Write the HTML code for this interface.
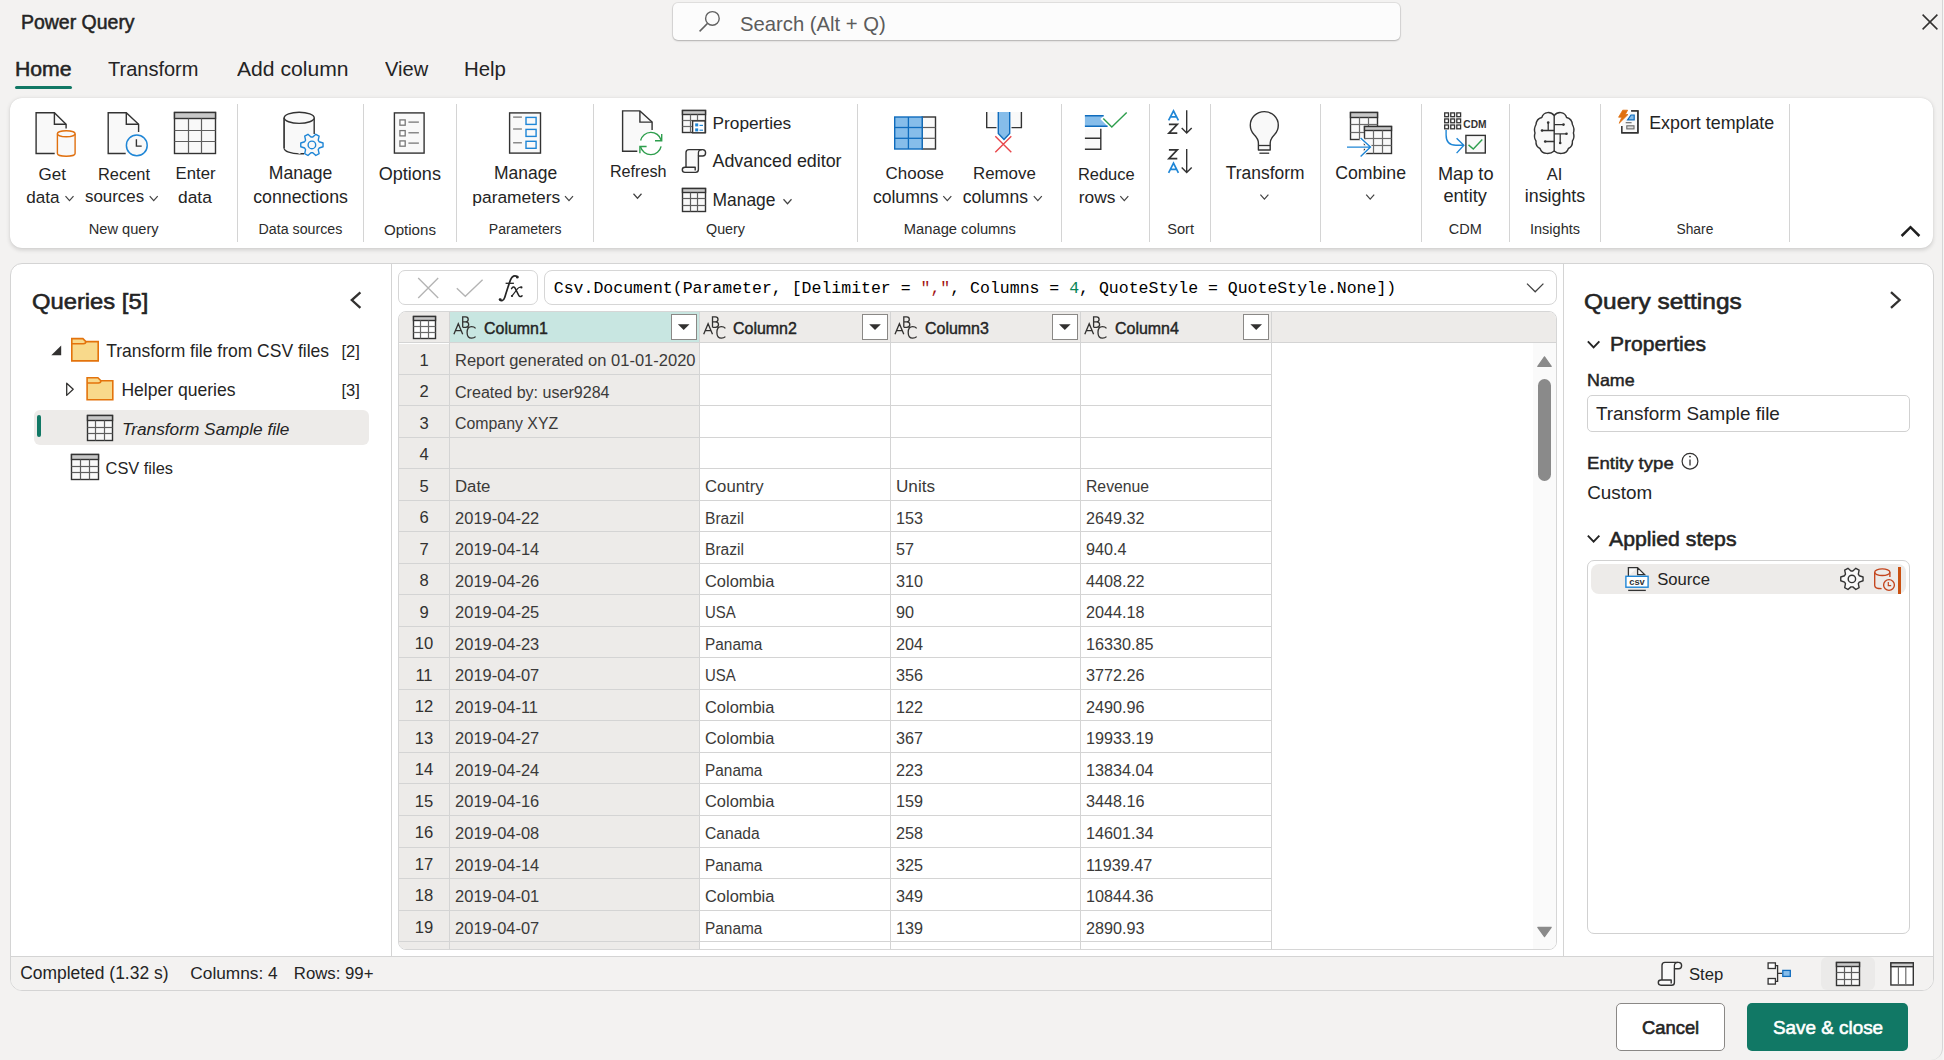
<!DOCTYPE html><html><head><meta charset="utf-8"><style>
html,body{margin:0;padding:0}
body{width:1944px;height:1060px;overflow:hidden;background:#f3f2f1;position:relative;font-family:"Liberation Sans",sans-serif;color:#242424}
.t{position:absolute;line-height:1;white-space:pre}
.b{position:absolute;box-sizing:border-box}
svg{position:absolute;left:0;top:0}
</style></head><body>
<div class="t" style="top:12.59px;font-size:19.86px;-webkit-text-stroke:0.52px #242424;left:21.20px;transform:scaleX(0.9803);transform-origin:0 0;">Power Query</div>
<div class="b" style="left:673px;top:3px;width:727px;height:37px;background:#fcfcfc;border-radius:5px;box-shadow:0 0 0 1px rgba(0,0,0,0.07),0 1px 2px rgba(0,0,0,0.22);"></div>
<div class="t" style="top:14.45px;font-size:20.14px;color:#5c5c5c;left:740.20px;transform:scaleX(1.0058);transform-origin:0 0;">Search (Alt + Q)</div>
<div class="b" style="left:-20px;top:-20px;width:1963px;height:1080px;border-right:1px solid #d6d6d6;border-bottom-right-radius:12px;"></div>
<div class="b" style="left:1943px;top:0px;width:1px;height:1060px;background:#f7f7f7;"></div>
<div class="t" style="top:58.70px;font-size:20.55px;-webkit-text-stroke:0.53px #242424;left:15.40px;transform:scaleX(1.0325);transform-origin:0 0;">Home</div>
<div class="t" style="top:59.04px;font-size:20.27px;left:108.00px;transform:scaleX(0.9878);transform-origin:0 0;">Transform</div>
<div class="t" style="top:59.04px;font-size:20.27px;left:236.50px;transform:scaleX(1.0418);transform-origin:0 0;">Add column</div>
<div class="t" style="top:59.04px;font-size:20.27px;left:384.80px;transform:scaleX(0.9901);transform-origin:0 0;">View</div>
<div class="t" style="top:59.04px;font-size:20.27px;left:464.30px;transform:scaleX(1.0047);transform-origin:0 0;">Help</div>
<div class="b" style="left:15px;top:86px;width:57px;height:3px;background:#117865;border-radius:1.5px;"></div>
<div class="b" style="left:10px;top:98px;width:1923px;height:150px;background:#ffffff;border-radius:12px;box-shadow:0 1.5px 4px rgba(0,0,0,0.15),0 0 1px rgba(0,0,0,0.1);"></div>
<div class="b" style="left:237px;top:104px;width:1px;height:138px;background:#d4d4d4;"></div>
<div class="b" style="left:363px;top:104px;width:1px;height:138px;background:#d4d4d4;"></div>
<div class="b" style="left:456px;top:104px;width:1px;height:138px;background:#d4d4d4;"></div>
<div class="b" style="left:593px;top:104px;width:1px;height:138px;background:#d4d4d4;"></div>
<div class="b" style="left:857px;top:104px;width:1px;height:138px;background:#d4d4d4;"></div>
<div class="b" style="left:1061px;top:104px;width:1px;height:138px;background:#d4d4d4;"></div>
<div class="b" style="left:1149px;top:104px;width:1px;height:138px;background:#d4d4d4;"></div>
<div class="b" style="left:1210px;top:104px;width:1px;height:138px;background:#d4d4d4;"></div>
<div class="b" style="left:1320px;top:104px;width:1px;height:138px;background:#d4d4d4;"></div>
<div class="b" style="left:1421px;top:104px;width:1px;height:138px;background:#d4d4d4;"></div>
<div class="b" style="left:1509px;top:104px;width:1px;height:138px;background:#d4d4d4;"></div>
<div class="b" style="left:1600px;top:104px;width:1px;height:138px;background:#d4d4d4;"></div>
<div class="b" style="left:1789px;top:104px;width:1px;height:138px;background:#d4d4d4;"></div>
<div class="t" style="top:165.67px;font-size:17.05px;left:38.50px;">Get</div>
<div class="t" style="top:189.12px;font-size:17.1px;left:26.30px;">data</div>
<div class="t" style="top:166.20px;font-size:16.42px;left:97.99px;">Recent</div>
<div class="t" style="top:189.29px;font-size:16.9px;left:85.00px;">sources</div>
<div class="t" style="top:165.97px;font-size:16.69px;left:175.61px;">Enter</div>
<div class="t" style="top:188.90px;font-size:17.36px;left:178.00px;">data</div>
<div class="t" style="top:165.21px;font-size:17.59px;left:268.81px;">Manage</div>
<div class="t" style="top:188.57px;font-size:17.76px;left:253.20px;">connections</div>
<div class="t" style="top:164.80px;font-size:18.07px;left:378.70px;">Options</div>
<div class="t" style="top:165.40px;font-size:17.48px;left:494.00px;">Manage</div>
<div class="t" style="top:188.87px;font-size:17.4px;left:472.30px;">parameters</div>
<div class="t" style="top:163.19px;font-size:16.2px;left:609.93px;">Refresh</div>
<div class="t" style="top:114.56px;font-size:17.29px;left:712.50px;">Properties</div>
<div class="t" style="top:152.96px;font-size:17.88px;left:712.49px;">Advanced editor</div>
<div class="t" style="top:192.12px;font-size:17.46px;left:712.49px;">Manage</div>
<div class="t" style="top:165.76px;font-size:16.94px;left:885.60px;">Choose</div>
<div class="t" style="top:188.70px;font-size:17.6px;left:872.89px;">columns</div>
<div class="t" style="top:165.82px;font-size:16.87px;left:973.00px;">Remove</div>
<div class="t" style="top:188.77px;font-size:17.52px;left:962.69px;">columns</div>
<div class="t" style="top:166.15px;font-size:16.48px;left:1077.89px;">Reduce</div>
<div class="t" style="top:188.93px;font-size:17.33px;left:1078.80px;">rows</div>
<div class="t" style="top:165.05px;font-size:17.43px;left:1225.81px;">Transform</div>
<div class="t" style="top:164.83px;font-size:17.69px;left:1335.20px;">Combine</div>
<div class="t" style="top:164.69px;font-size:18.2px;left:1437.93px;">Map to</div>
<div class="t" style="top:187.19px;font-size:18.2px;left:1443.40px;">entity</div>
<div class="t" style="top:166.12px;font-size:16.51px;left:1546.70px;">AI</div>
<div class="t" style="top:187.52px;font-size:17.82px;left:1524.80px;">insights</div>
<div class="t" style="top:114.67px;font-size:17.87px;left:1649.18px;">Export template</div>
<div class="t" style="top:221.91px;font-size:14.64px;color:#2b2b2b;left:88.71px;">New query</div>
<div class="t" style="top:222.25px;font-size:14.24px;color:#2b2b2b;left:258.50px;">Data sources</div>
<div class="t" style="top:221.51px;font-size:15.11px;color:#2b2b2b;left:383.90px;">Options</div>
<div class="t" style="top:222.39px;font-size:14.07px;color:#2b2b2b;left:488.80px;">Parameters</div>
<div class="t" style="top:222.17px;font-size:14.33px;color:#2b2b2b;left:705.99px;">Query</div>
<div class="t" style="top:221.83px;font-size:14.73px;color:#2b2b2b;left:903.82px;">Manage columns</div>
<div class="t" style="top:221.94px;font-size:14.6px;color:#2b2b2b;left:1167.20px;">Sort</div>
<div class="t" style="top:222.05px;font-size:14.47px;color:#2b2b2b;left:1448.75px;">CDM</div>
<div class="t" style="top:222.03px;font-size:14.5px;color:#2b2b2b;left:1530.01px;">Insights</div>
<div class="t" style="top:222.62px;font-size:13.8px;color:#2b2b2b;left:1676.49px;">Share</div>
<div class="b" style="left:10px;top:263px;width:1924px;height:728px;background:#ffffff;border:1px solid #d4d4d4;border-radius:12px;overflow:hidden;"></div>
<div class="b" style="left:11px;top:956px;width:1922px;height:34px;background:#f3f2f1;border-top:1px solid #d4d4d4;border-radius:0 0 11px 11px;"></div>
<div class="b" style="left:391px;top:264px;width:1px;height:692px;background:#d4d4d4;"></div>
<div class="b" style="left:1563px;top:264px;width:1px;height:692px;background:#d4d4d4;"></div>
<div class="t" style="top:289.93px;font-size:22.88px;-webkit-text-stroke:0.59px #242424;left:31.50px;transform:scaleX(1.0389);transform-origin:0 0;">Queries [5]</div>
<div class="t" style="top:342.69px;font-size:17.49px;left:106.22px;">Transform file from CSV files</div>
<div class="t" style="top:343.50px;font-size:16.54px;left:341.40px;">[2]</div>
<div class="t" style="top:381.64px;font-size:17.56px;left:121.41px;">Helper queries</div>
<div class="t" style="top:382.50px;font-size:16.54px;left:341.40px;">[3]</div>
<div class="b" style="left:34px;top:410px;width:335px;height:35px;background:#edebe9;border-radius:6px;"></div>
<div class="b" style="left:37px;top:415px;width:4px;height:22px;background:#117865;border-radius:2px;"></div>
<div class="t" style="top:420.50px;font-size:17.25px;font-style:italic;left:122.02px;">Transform Sample file</div>
<div class="t" style="top:459.93px;font-size:16.39px;left:105.60px;">CSV files</div>
<div class="b" style="left:398px;top:270px;width:140px;height:35px;background:#fff;border:1px solid #d6d6d6;border-radius:7px;"></div>
<div class="b" style="left:544px;top:270px;width:1013px;height:35px;background:#fff;border:1px solid #d6d6d6;border-radius:8px;"></div>
<div class="t" style="top:281.14px;font-size:16.52px;color:#000000;font-family:'Liberation Mono';left:553.80px;">Csv.Document(Parameter, [Delimiter = <span style="color:#a31515">","</span>, Columns = <span style="color:#098658">4</span>, QuoteStyle = QuoteStyle.None])</div>
<div class="b" style="left:398px;top:311px;width:1159px;height:639px;background:#ffffff;border:1px solid #d6d6d6;border-radius:8px;overflow:hidden;"></div>
<div class="b" style="left:399px;top:312px;width:1157px;height:31px;background:#edebe9;border-radius:7px 7px 0 0;"></div>
<div class="b" style="left:450px;top:312px;width:249px;height:31px;background:#c8e6e1;"></div>
<div class="b" style="left:399px;top:343px;width:300px;height:606px;background:#edebe9;border-radius:0 0 0 7px;"></div>
<div class="b" style="left:399px;top:342px;width:1157px;height:1px;background:#d4d4d4;"></div>
<div class="b" style="left:399px;top:343px;width:50px;height:1px;background:#ffffff;"></div>
<div class="b" style="left:1533px;top:343px;width:23px;height:606px;background:#fafafa;border-radius:0 0 7px 0;"></div>
<div class="b" style="left:399px;top:374px;width:873px;height:1px;background:#d4d4d4;"></div>
<div class="b" style="left:399px;top:405px;width:873px;height:1px;background:#d4d4d4;"></div>
<div class="b" style="left:399px;top:437px;width:873px;height:1px;background:#d4d4d4;"></div>
<div class="b" style="left:399px;top:468px;width:873px;height:1px;background:#d4d4d4;"></div>
<div class="b" style="left:399px;top:500px;width:873px;height:1px;background:#d4d4d4;"></div>
<div class="b" style="left:399px;top:531px;width:873px;height:1px;background:#d4d4d4;"></div>
<div class="b" style="left:399px;top:563px;width:873px;height:1px;background:#d4d4d4;"></div>
<div class="b" style="left:399px;top:594px;width:873px;height:1px;background:#d4d4d4;"></div>
<div class="b" style="left:399px;top:626px;width:873px;height:1px;background:#d4d4d4;"></div>
<div class="b" style="left:399px;top:657px;width:873px;height:1px;background:#d4d4d4;"></div>
<div class="b" style="left:399px;top:689px;width:873px;height:1px;background:#d4d4d4;"></div>
<div class="b" style="left:399px;top:720px;width:873px;height:1px;background:#d4d4d4;"></div>
<div class="b" style="left:399px;top:752px;width:873px;height:1px;background:#d4d4d4;"></div>
<div class="b" style="left:399px;top:783px;width:873px;height:1px;background:#d4d4d4;"></div>
<div class="b" style="left:399px;top:815px;width:873px;height:1px;background:#d4d4d4;"></div>
<div class="b" style="left:399px;top:847px;width:873px;height:1px;background:#d4d4d4;"></div>
<div class="b" style="left:399px;top:878px;width:873px;height:1px;background:#d4d4d4;"></div>
<div class="b" style="left:399px;top:910px;width:873px;height:1px;background:#d4d4d4;"></div>
<div class="b" style="left:399px;top:941px;width:873px;height:1px;background:#d4d4d4;"></div>
<div class="b" style="left:449px;top:312px;width:1px;height:637px;background:#d4d4d4;"></div>
<div class="b" style="left:699px;top:312px;width:1px;height:637px;background:#d4d4d4;"></div>
<div class="b" style="left:890px;top:312px;width:1px;height:637px;background:#d4d4d4;"></div>
<div class="b" style="left:1080px;top:312px;width:1px;height:637px;background:#d4d4d4;"></div>
<div class="b" style="left:1271px;top:312px;width:1px;height:637px;background:#d4d4d4;"></div>
<div class="t" style="top:352.65px;font-size:16.6px;color:#323130;left:124.00px;width:600px;text-align:center;">1</div>
<div class="t" style="top:352.18px;font-size:16.45px;color:#3b3a39;left:455.10px;transform:scaleX(1.0046);transform-origin:0 0;">Report generated on 01-01-2020</div>
<div class="t" style="top:384.17px;font-size:16.6px;color:#323130;left:124.00px;width:600px;text-align:center;">2</div>
<div class="t" style="top:383.70px;font-size:16.45px;color:#3b3a39;left:455.10px;transform:scaleX(0.9777);transform-origin:0 0;">Created by: user9284</div>
<div class="t" style="top:415.69px;font-size:16.6px;color:#323130;left:124.00px;width:600px;text-align:center;">3</div>
<div class="t" style="top:415.22px;font-size:16.45px;color:#3b3a39;left:455.10px;transform:scaleX(0.9660);transform-origin:0 0;">Company XYZ</div>
<div class="t" style="top:447.21px;font-size:16.6px;color:#323130;left:124.00px;width:600px;text-align:center;">4</div>
<div class="t" style="top:478.73px;font-size:16.6px;color:#323130;left:124.00px;width:600px;text-align:center;">5</div>
<div class="t" style="top:478.26px;font-size:16.45px;color:#3b3a39;left:455.10px;transform:scaleX(1.0212);transform-origin:0 0;">Date</div>
<div class="t" style="top:478.26px;font-size:16.45px;color:#3b3a39;left:704.90px;transform:scaleX(1.0175);transform-origin:0 0;">Country</div>
<div class="t" style="top:478.26px;font-size:16.45px;color:#3b3a39;left:896.20px;transform:scaleX(1.0417);transform-origin:0 0;">Units</div>
<div class="t" style="top:478.26px;font-size:16.45px;color:#3b3a39;left:1086.00px;transform:scaleX(0.9578);transform-origin:0 0;">Revenue</div>
<div class="t" style="top:510.25px;font-size:16.6px;color:#323130;left:124.00px;width:600px;text-align:center;">6</div>
<div class="t" style="top:509.78px;font-size:16.45px;color:#3b3a39;left:455.10px;transform:scaleX(1.0000);transform-origin:0 0;">2019-04-22</div>
<div class="t" style="top:509.78px;font-size:16.45px;color:#3b3a39;left:704.90px;transform:scaleX(0.9487);transform-origin:0 0;">Brazil</div>
<div class="t" style="top:509.78px;font-size:16.45px;color:#3b3a39;left:896.20px;transform:scaleX(0.9851);transform-origin:0 0;">153</div>
<div class="t" style="top:509.78px;font-size:16.45px;color:#3b3a39;left:1086.00px;transform:scaleX(0.9851);transform-origin:0 0;">2649.32</div>
<div class="t" style="top:541.77px;font-size:16.6px;color:#323130;left:124.00px;width:600px;text-align:center;">7</div>
<div class="t" style="top:541.30px;font-size:16.45px;color:#3b3a39;left:455.10px;transform:scaleX(1.0000);transform-origin:0 0;">2019-04-14</div>
<div class="t" style="top:541.30px;font-size:16.45px;color:#3b3a39;left:704.90px;transform:scaleX(0.9487);transform-origin:0 0;">Brazil</div>
<div class="t" style="top:541.30px;font-size:16.45px;color:#3b3a39;left:896.20px;transform:scaleX(0.9851);transform-origin:0 0;">57</div>
<div class="t" style="top:541.30px;font-size:16.45px;color:#3b3a39;left:1086.00px;transform:scaleX(0.9851);transform-origin:0 0;">940.4</div>
<div class="t" style="top:573.29px;font-size:16.6px;color:#323130;left:124.00px;width:600px;text-align:center;">8</div>
<div class="t" style="top:572.82px;font-size:16.45px;color:#3b3a39;left:455.10px;transform:scaleX(1.0000);transform-origin:0 0;">2019-04-26</div>
<div class="t" style="top:572.82px;font-size:16.45px;color:#3b3a39;left:704.90px;transform:scaleX(0.9986);transform-origin:0 0;">Colombia</div>
<div class="t" style="top:572.82px;font-size:16.45px;color:#3b3a39;left:896.20px;transform:scaleX(0.9851);transform-origin:0 0;">310</div>
<div class="t" style="top:572.82px;font-size:16.45px;color:#3b3a39;left:1086.00px;transform:scaleX(0.9851);transform-origin:0 0;">4408.22</div>
<div class="t" style="top:604.81px;font-size:16.6px;color:#323130;left:124.00px;width:600px;text-align:center;">9</div>
<div class="t" style="top:604.34px;font-size:16.45px;color:#3b3a39;left:455.10px;transform:scaleX(1.0000);transform-origin:0 0;">2019-04-25</div>
<div class="t" style="top:604.34px;font-size:16.45px;color:#3b3a39;left:704.90px;transform:scaleX(0.9091);transform-origin:0 0;">USA</div>
<div class="t" style="top:604.34px;font-size:16.45px;color:#3b3a39;left:896.20px;transform:scaleX(0.9851);transform-origin:0 0;">90</div>
<div class="t" style="top:604.34px;font-size:16.45px;color:#3b3a39;left:1086.00px;transform:scaleX(0.9851);transform-origin:0 0;">2044.18</div>
<div class="t" style="top:636.33px;font-size:16.6px;color:#323130;left:124.00px;width:600px;text-align:center;">10</div>
<div class="t" style="top:635.86px;font-size:16.45px;color:#3b3a39;left:455.10px;transform:scaleX(1.0000);transform-origin:0 0;">2019-04-23</div>
<div class="t" style="top:635.86px;font-size:16.45px;color:#3b3a39;left:704.90px;transform:scaleX(0.9367);transform-origin:0 0;">Panama</div>
<div class="t" style="top:635.86px;font-size:16.45px;color:#3b3a39;left:896.20px;transform:scaleX(0.9851);transform-origin:0 0;">204</div>
<div class="t" style="top:635.86px;font-size:16.45px;color:#3b3a39;left:1086.00px;transform:scaleX(0.9851);transform-origin:0 0;">16330.85</div>
<div class="t" style="top:667.85px;font-size:16.6px;color:#323130;left:124.00px;width:600px;text-align:center;">11</div>
<div class="t" style="top:667.38px;font-size:16.45px;color:#3b3a39;left:455.10px;transform:scaleX(1.0000);transform-origin:0 0;">2019-04-07</div>
<div class="t" style="top:667.38px;font-size:16.45px;color:#3b3a39;left:704.90px;transform:scaleX(0.9091);transform-origin:0 0;">USA</div>
<div class="t" style="top:667.38px;font-size:16.45px;color:#3b3a39;left:896.20px;transform:scaleX(0.9851);transform-origin:0 0;">356</div>
<div class="t" style="top:667.38px;font-size:16.45px;color:#3b3a39;left:1086.00px;transform:scaleX(0.9851);transform-origin:0 0;">3772.26</div>
<div class="t" style="top:699.37px;font-size:16.6px;color:#323130;left:124.00px;width:600px;text-align:center;">12</div>
<div class="t" style="top:698.90px;font-size:16.45px;color:#3b3a39;left:455.10px;transform:scaleX(1.0000);transform-origin:0 0;">2019-04-11</div>
<div class="t" style="top:698.90px;font-size:16.45px;color:#3b3a39;left:704.90px;transform:scaleX(0.9986);transform-origin:0 0;">Colombia</div>
<div class="t" style="top:698.90px;font-size:16.45px;color:#3b3a39;left:896.20px;transform:scaleX(0.9851);transform-origin:0 0;">122</div>
<div class="t" style="top:698.90px;font-size:16.45px;color:#3b3a39;left:1086.00px;transform:scaleX(0.9851);transform-origin:0 0;">2490.96</div>
<div class="t" style="top:730.89px;font-size:16.6px;color:#323130;left:124.00px;width:600px;text-align:center;">13</div>
<div class="t" style="top:730.42px;font-size:16.45px;color:#3b3a39;left:455.10px;transform:scaleX(1.0000);transform-origin:0 0;">2019-04-27</div>
<div class="t" style="top:730.42px;font-size:16.45px;color:#3b3a39;left:704.90px;transform:scaleX(0.9986);transform-origin:0 0;">Colombia</div>
<div class="t" style="top:730.42px;font-size:16.45px;color:#3b3a39;left:896.20px;transform:scaleX(0.9851);transform-origin:0 0;">367</div>
<div class="t" style="top:730.42px;font-size:16.45px;color:#3b3a39;left:1086.00px;transform:scaleX(0.9851);transform-origin:0 0;">19933.19</div>
<div class="t" style="top:762.41px;font-size:16.6px;color:#323130;left:124.00px;width:600px;text-align:center;">14</div>
<div class="t" style="top:761.94px;font-size:16.45px;color:#3b3a39;left:455.10px;transform:scaleX(1.0000);transform-origin:0 0;">2019-04-24</div>
<div class="t" style="top:761.94px;font-size:16.45px;color:#3b3a39;left:704.90px;transform:scaleX(0.9367);transform-origin:0 0;">Panama</div>
<div class="t" style="top:761.94px;font-size:16.45px;color:#3b3a39;left:896.20px;transform:scaleX(0.9851);transform-origin:0 0;">223</div>
<div class="t" style="top:761.94px;font-size:16.45px;color:#3b3a39;left:1086.00px;transform:scaleX(0.9851);transform-origin:0 0;">13834.04</div>
<div class="t" style="top:793.93px;font-size:16.6px;color:#323130;left:124.00px;width:600px;text-align:center;">15</div>
<div class="t" style="top:793.46px;font-size:16.45px;color:#3b3a39;left:455.10px;transform:scaleX(1.0000);transform-origin:0 0;">2019-04-16</div>
<div class="t" style="top:793.46px;font-size:16.45px;color:#3b3a39;left:704.90px;transform:scaleX(0.9986);transform-origin:0 0;">Colombia</div>
<div class="t" style="top:793.46px;font-size:16.45px;color:#3b3a39;left:896.20px;transform:scaleX(0.9851);transform-origin:0 0;">159</div>
<div class="t" style="top:793.46px;font-size:16.45px;color:#3b3a39;left:1086.00px;transform:scaleX(0.9851);transform-origin:0 0;">3448.16</div>
<div class="t" style="top:825.45px;font-size:16.6px;color:#323130;left:124.00px;width:600px;text-align:center;">16</div>
<div class="t" style="top:824.98px;font-size:16.45px;color:#3b3a39;left:455.10px;transform:scaleX(1.0000);transform-origin:0 0;">2019-04-08</div>
<div class="t" style="top:824.98px;font-size:16.45px;color:#3b3a39;left:704.90px;transform:scaleX(0.9500);transform-origin:0 0;">Canada</div>
<div class="t" style="top:824.98px;font-size:16.45px;color:#3b3a39;left:896.20px;transform:scaleX(0.9851);transform-origin:0 0;">258</div>
<div class="t" style="top:824.98px;font-size:16.45px;color:#3b3a39;left:1086.00px;transform:scaleX(0.9851);transform-origin:0 0;">14601.34</div>
<div class="t" style="top:856.97px;font-size:16.6px;color:#323130;left:124.00px;width:600px;text-align:center;">17</div>
<div class="t" style="top:856.50px;font-size:16.45px;color:#3b3a39;left:455.10px;transform:scaleX(1.0000);transform-origin:0 0;">2019-04-14</div>
<div class="t" style="top:856.50px;font-size:16.45px;color:#3b3a39;left:704.90px;transform:scaleX(0.9367);transform-origin:0 0;">Panama</div>
<div class="t" style="top:856.50px;font-size:16.45px;color:#3b3a39;left:896.20px;transform:scaleX(0.9851);transform-origin:0 0;">325</div>
<div class="t" style="top:856.50px;font-size:16.45px;color:#3b3a39;left:1086.00px;transform:scaleX(0.9851);transform-origin:0 0;">11939.47</div>
<div class="t" style="top:888.49px;font-size:16.6px;color:#323130;left:124.00px;width:600px;text-align:center;">18</div>
<div class="t" style="top:888.02px;font-size:16.45px;color:#3b3a39;left:455.10px;transform:scaleX(1.0000);transform-origin:0 0;">2019-04-01</div>
<div class="t" style="top:888.02px;font-size:16.45px;color:#3b3a39;left:704.90px;transform:scaleX(0.9986);transform-origin:0 0;">Colombia</div>
<div class="t" style="top:888.02px;font-size:16.45px;color:#3b3a39;left:896.20px;transform:scaleX(0.9851);transform-origin:0 0;">349</div>
<div class="t" style="top:888.02px;font-size:16.45px;color:#3b3a39;left:1086.00px;transform:scaleX(0.9851);transform-origin:0 0;">10844.36</div>
<div class="t" style="top:920.01px;font-size:16.6px;color:#323130;left:124.00px;width:600px;text-align:center;">19</div>
<div class="t" style="top:919.54px;font-size:16.45px;color:#3b3a39;left:455.10px;transform:scaleX(1.0000);transform-origin:0 0;">2019-04-07</div>
<div class="t" style="top:919.54px;font-size:16.45px;color:#3b3a39;left:704.90px;transform:scaleX(0.9367);transform-origin:0 0;">Panama</div>
<div class="t" style="top:919.54px;font-size:16.45px;color:#3b3a39;left:896.20px;transform:scaleX(0.9851);transform-origin:0 0;">139</div>
<div class="t" style="top:919.54px;font-size:16.45px;color:#3b3a39;left:1086.00px;transform:scaleX(0.9851);transform-origin:0 0;">2890.93</div>
<div class="t" style="top:319.73px;font-size:16.03px;-webkit-text-stroke:0.42px #242424;left:483.60px;transform:scaleX(0.9959);transform-origin:0 0;">Column1</div>
<div class="b" style="left:671px;top:314px;width:26px;height:26px;background:#fff;border:1px solid #8a8886;"></div>
<div class="t" style="top:319.73px;font-size:16.03px;-webkit-text-stroke:0.42px #242424;left:733.40px;transform:scaleX(0.9959);transform-origin:0 0;">Column2</div>
<div class="b" style="left:862px;top:314px;width:26px;height:26px;background:#fff;border:1px solid #8a8886;"></div>
<div class="t" style="top:319.73px;font-size:16.03px;-webkit-text-stroke:0.42px #242424;left:924.70px;transform:scaleX(0.9959);transform-origin:0 0;">Column3</div>
<div class="b" style="left:1052px;top:314px;width:26px;height:26px;background:#fff;border:1px solid #8a8886;"></div>
<div class="t" style="top:319.73px;font-size:16.03px;-webkit-text-stroke:0.42px #242424;left:1114.50px;transform:scaleX(0.9959);transform-origin:0 0;">Column4</div>
<div class="b" style="left:1243px;top:314px;width:26px;height:26px;background:#fff;border:1px solid #8a8886;"></div>
<div class="b" style="left:1538px;top:379px;width:13px;height:102px;background:#8a8a8a;border-radius:6.5px;"></div>
<div class="t" style="top:290.35px;font-size:22.74px;-webkit-text-stroke:0.59px #242424;left:1584.30px;transform:scaleX(1.0763);transform-origin:0 0;">Query settings</div>
<div class="t" style="top:333.94px;font-size:20.27px;-webkit-text-stroke:0.53px #242424;left:1609.80px;transform:scaleX(1.0392);transform-origin:0 0;">Properties</div>
<div class="t" style="top:372.21px;font-size:17.12px;-webkit-text-stroke:0.45px #242424;left:1587.30px;transform:scaleX(1.0445);transform-origin:0 0;">Name</div>
<div class="b" style="left:1587px;top:395px;width:323px;height:37px;background:#fff;border:1px solid #d1d1d1;border-radius:5px;"></div>
<div class="t" style="top:404.71px;font-size:18.89px;left:1595.91px;">Transform Sample file</div>
<div class="t" style="top:455.01px;font-size:17.12px;-webkit-text-stroke:0.45px #242424;left:1587.20px;transform:scaleX(1.0857);transform-origin:0 0;">Entity type</div>
<div class="t" style="top:484.43px;font-size:18.87px;left:1587.20px;">Custom</div>
<div class="t" style="top:529.34px;font-size:20.27px;-webkit-text-stroke:0.53px #242424;left:1609.40px;transform:scaleX(1.0483);transform-origin:0 0;">Applied steps</div>
<div class="b" style="left:1587px;top:560px;width:323px;height:374px;background:#fff;border:1px solid #d1d1d1;border-radius:7px;"></div>
<div class="b" style="left:1591px;top:564px;width:315px;height:30px;background:#edebe9;border-radius:8px;"></div>
<div class="t" style="top:572.09px;font-size:16.67px;left:1657.20px;">Source</div>
<div class="b" style="left:1898px;top:567px;width:3px;height:27px;background:#ca5010;"></div>
<div class="t" style="top:965.32px;font-size:17.46px;left:20.20px;">Completed (1.32 s)</div>
<div class="t" style="top:965.46px;font-size:17.3px;left:190.30px;">Columns: 4</div>
<div class="t" style="top:965.90px;font-size:16.77px;left:293.80px;">Rows: 99+</div>
<div class="t" style="top:967.39px;font-size:16.67px;left:1688.90px;">Step</div>
<div class="b" style="left:1821px;top:957px;width:54px;height:33px;background:#ebeae9;border-radius:6px;"></div>
<div class="b" style="left:1616px;top:1003px;width:109px;height:48px;background:#ffffff;border:1px solid #8a8886;border-radius:5px;"></div>
<div class="t" style="top:1018.36px;font-size:19.18px;-webkit-text-stroke:0.6px #242424;left:1641.80px;transform:scaleX(0.9582);transform-origin:0 0;">Cancel</div>
<div class="b" style="left:1747px;top:1003px;width:161px;height:48px;background:#117865;border-radius:5px;"></div>
<div class="t" style="top:1018.36px;font-size:19.18px;-webkit-text-stroke:0.6px #ffffff;color:#ffffff;left:1772.80px;transform:scaleX(0.9834);transform-origin:0 0;">Save &amp; close</div>
<svg width="1944" height="1060" viewBox="0 0 1944 1060"><circle cx="712.4" cy="18.4" r="6.8" fill="none" stroke="#616161" stroke-width="1.4"/><line x1="707.3" y1="23.6" x2="699.6" y2="31.4" stroke="#616161" stroke-width="1.5"/><path d="M1922.6,14.6 L1937.4,29.4 M1937.4,14.6 L1922.6,29.4" stroke="#323130" stroke-width="1.5"/><polyline points="65.50,196.05 69.50,200.55 73.50,196.05" fill="none" stroke="#424242" stroke-width="1.2"/><polyline points="149.70,196.05 153.70,200.55 157.70,196.05" fill="none" stroke="#424242" stroke-width="1.2"/><polyline points="565.00,196.05 569.00,200.55 573.00,196.05" fill="none" stroke="#424242" stroke-width="1.2"/><polyline points="633.50,193.75 637.50,198.25 641.50,193.75" fill="none" stroke="#424242" stroke-width="1.2"/><polyline points="783.50,199.25 787.50,203.75 791.50,199.25" fill="none" stroke="#424242" stroke-width="1.2"/><polyline points="943.30,196.05 947.30,200.55 951.30,196.05" fill="none" stroke="#424242" stroke-width="1.2"/><polyline points="1033.80,196.05 1037.80,200.55 1041.80,196.05" fill="none" stroke="#424242" stroke-width="1.2"/><polyline points="1120.30,196.05 1124.30,200.55 1128.30,196.05" fill="none" stroke="#424242" stroke-width="1.2"/><polyline points="1260.40,194.65 1264.40,199.15 1268.40,194.65" fill="none" stroke="#424242" stroke-width="1.2"/><polyline points="1366.20,194.65 1370.20,199.15 1374.20,194.65" fill="none" stroke="#424242" stroke-width="1.2"/><polyline points="1901.6,236 1910.5,227.2 1919.4,236" fill="none" stroke="#1f1f1f" stroke-width="2.5"/><path d="M36.1,112.7 L54.4,112.7 L66.1,124.3 L66.1,153.5 L36.1,153.5 Z" fill="#f9f9f9" stroke="none"/><path d="M54.7,153.5 L36.1,153.5 L36.1,112.7 L54.4,112.7 L66.1,124.3 L66.1,128.5" fill="none" stroke="#333333" stroke-width="1.4"/><path d="M54.4,112.7 L54.4,124.3 L66.1,124.3" fill="none" stroke="#333333" stroke-width="1.4"/><path d="M57.4,133.7 L57.4,153.4 A8.85,2.9 0 0 0 75.1,153.4 L75.1,133.7" fill="#f9f9f9" stroke="#e0700f" stroke-width="1.4"/><ellipse cx="66.25" cy="133.7" rx="8.85" ry="3.0" fill="#f9f9f9" stroke="#e0700f" stroke-width="1.4"/><path d="M108.2,112.7 L126.3,112.7 L138.6,124.3 L138.6,153.5 L108.2,153.5 Z" fill="#f9f9f9" stroke="none"/><path d="M125.7,153.5 L108.2,153.5 L108.2,112.7 L126.3,112.7 L138.6,124.3 L138.6,131.9" fill="none" stroke="#333333" stroke-width="1.4"/><path d="M126.3,112.7 L126.3,124.3 L138.6,124.3" fill="none" stroke="#333333" stroke-width="1.4"/><circle cx="136.8" cy="145.4" r="10.4" fill="#f9f9f9" stroke="#1f86d6" stroke-width="1.5"/><path d="M136.4,139.3 L136.4,146.1 L141.7,146.1" fill="none" stroke="#333333" stroke-width="1.4"/><rect x="174.5" y="112.5" width="41.0" height="41.0" fill="#f9f9f9" stroke="#333333" stroke-width="1.4"/><rect x="174.5" y="112.5" width="41.0" height="6.0" fill="#c8c8c8" stroke="#333333" stroke-width="1.4"/><line x1="174.5" y1="130.5" x2="215.5" y2="130.5" stroke="#5e5e5e" stroke-width="1.2"/><line x1="174.5" y1="141.5" x2="215.5" y2="141.5" stroke="#5e5e5e" stroke-width="1.2"/><line x1="188.5" y1="118.5" x2="188.5" y2="153.5" stroke="#5e5e5e" stroke-width="1.2"/><line x1="201.5" y1="118.5" x2="201.5" y2="153.5" stroke="#5e5e5e" stroke-width="1.2"/><path d="M284.2,117.8 L284.2,148.2 A15.25,5.6 0 0 0 299.5,153.8 L304,153.8" fill="#f9f9f9" stroke="#333333" stroke-width="1.4"/><path d="M284.2,148.2 L284.2,117.8 L314.2,117.8 L314.2,135 L300,154 Z" fill="#f9f9f9" stroke="none"/><path d="M284.2,148.2 L284.2,117.8" stroke="#333333" stroke-width="1.4"/><path d="M314.2,117.8 L314.2,134" stroke="#333333" stroke-width="1.4"/><ellipse cx="299.2" cy="117.8" rx="15" ry="5.6" fill="#f9f9f9" stroke="#333333" stroke-width="1.4"/><path d="M319.15,141.76 L323.04,143.02 L323.04,146.78 L319.15,148.04 L318.24,149.61 L319.10,153.61 L315.84,155.49 L312.81,152.75 L310.99,152.75 L307.96,155.49 L304.70,153.61 L305.56,149.61 L304.65,148.04 L300.76,146.78 L300.76,143.02 L304.65,141.76 L305.56,140.19 L304.70,136.19 L307.96,134.31 L310.99,137.05 L312.81,137.05 L315.84,134.31 L319.10,136.19 L318.24,140.19Z" fill="#f9f9f9" stroke="#1f86d6" stroke-width="1.4" stroke-linejoin="round"/><circle cx="311.9" cy="144.9" r="3.8" fill="none" stroke="#1f86d6" stroke-width="1.4"/><rect x="394.4" y="112.9" width="29.7" height="40.2" fill="#f9f9f9" stroke="#333333" stroke-width="1.4"/><rect x="399.9" y="119.9" width="5.3" height="5.3" fill="#fff" stroke="#777" stroke-width="1.3"/><line x1="408.4" y1="122.10000000000001" x2="418.9" y2="122.10000000000001" stroke="#6e6e6e" stroke-width="1.2"/><rect x="399.9" y="130.6" width="5.3" height="5.3" fill="#fff" stroke="#777" stroke-width="1.3"/><line x1="408.4" y1="132.79999999999998" x2="418.9" y2="132.79999999999998" stroke="#6e6e6e" stroke-width="1.2"/><rect x="399.9" y="140.9" width="5.3" height="5.3" fill="#fff" stroke="#777" stroke-width="1.3"/><line x1="408.4" y1="143.1" x2="418.9" y2="143.1" stroke="#6e6e6e" stroke-width="1.2"/><rect x="509.6" y="112.9" width="30.9" height="40.2" fill="#f9f9f9" stroke="#333333" stroke-width="1.4"/><line x1="513.1" y1="117.1" x2="521.9" y2="117.1" stroke="#6e6e6e" stroke-width="1.2"/><rect x="526.0" y="117.39999999999999" width="10.1" height="7.0" fill="#f9f9f9" stroke="#1f86d6" stroke-width="1.4"/><line x1="513.1" y1="129.0" x2="521.9" y2="129.0" stroke="#6e6e6e" stroke-width="1.2"/><rect x="526.0" y="129.4" width="10.1" height="7.0" fill="#f9f9f9" stroke="#1f86d6" stroke-width="1.4"/><line x1="513.1" y1="142.8" x2="521.9" y2="142.8" stroke="#6e6e6e" stroke-width="1.2"/><rect x="526.0" y="141.29999999999998" width="10.1" height="7.0" fill="#f9f9f9" stroke="#1f86d6" stroke-width="1.4"/><path d="M622.6,110.9 L639.9,110.9 L652.1,122.1 L652.1,151.2 L622.6,151.2 Z" fill="#f9f9f9" stroke="none"/><path d="M637.3,151.2 L622.6,151.2 L622.6,110.9 L639.9,110.9 L652.1,122.1 L652.1,129.9" fill="none" stroke="#333333" stroke-width="1.4"/><path d="M639.9,110.9 L639.9,122.1 L652.1,122.1" fill="none" stroke="#333333" stroke-width="1.4"/><circle cx="650.8" cy="143.4" r="12" fill="#ffffff" stroke="none"/><path d="M640.6,140.5 A10.6,10.6 0 0 1 661.1,140" fill="none" stroke="#2e9e4d" stroke-width="1.4"/><path d="M661.1,146.3 A10.6,10.6 0 0 1 640.5,146.8" fill="none" stroke="#2e9e4d" stroke-width="1.4"/><path d="M655,140.8 L661.7,140.8 L661.7,134" fill="none" stroke="#2e9e4d" stroke-width="1.4"/><path d="M646.6,146.5 L639.9,146.5 L639.9,153.2" fill="none" stroke="#2e9e4d" stroke-width="1.4"/><rect x="682.5" y="110.5" width="23.0" height="22.0" fill="#f9f9f9" stroke="#333333" stroke-width="1.4"/><rect x="682.5" y="110.5" width="23.0" height="4.0" fill="#c8c8c8" stroke="#333333" stroke-width="1.4"/><line x1="682.5" y1="120.5" x2="705.5" y2="120.5" stroke="#6b6b6b" stroke-width="1.2"/><line x1="682.5" y1="126.5" x2="705.5" y2="126.5" stroke="#6b6b6b" stroke-width="1.2"/><line x1="690.5" y1="114.5" x2="690.5" y2="132.5" stroke="#6b6b6b" stroke-width="1.2"/><line x1="697.5" y1="114.5" x2="697.5" y2="132.5" stroke="#6b6b6b" stroke-width="1.2"/><rect x="692.6" y="120.9" width="12.5" height="11.9" fill="#ffffff" stroke="#333333" stroke-width="1.4"/><rect x="695.2" y="123.4" width="3" height="3" fill="#1f86d6"/><rect x="695.2" y="128.4" width="3" height="3" fill="#1f86d6"/><line x1="699.5" y1="125.4" x2="703" y2="125.4" stroke="#1f86d6" stroke-width="1.2"/><line x1="699.5" y1="130.2" x2="703" y2="130.2" stroke="#1f86d6" stroke-width="1.2"/><path d="M686.00,167.20 L686.00,152.60 Q686.00,149.60 689.00,149.60 L702.60,149.60 Q705.60,149.60 705.60,152.80 Q705.60,156.00 702.60,156.00 L698.40,156.00 L698.40,169.60 Q698.40,172.40 695.60,172.40 L685.00,172.40 Q682.30,172.40 682.30,169.80 Q682.30,167.20 685.00,167.20 L695.20,167.20 L695.20,170.60" fill="#f9f9f9" stroke="#333333" stroke-width="1.4" stroke-linejoin="round"/><path d="M698.40,156.00 L698.40,152.80 Q698.40,149.60 702.00,149.60" fill="none" stroke="#333333" stroke-width="1.3"/><rect x="682.5" y="188.5" width="23.0" height="23.0" fill="#f9f9f9" stroke="#333333" stroke-width="1.4"/><rect x="682.5" y="188.5" width="23.0" height="4.0" fill="#c8c8c8" stroke="#333333" stroke-width="1.4"/><line x1="682.5" y1="198.5" x2="705.5" y2="198.5" stroke="#5e5e5e" stroke-width="1.2"/><line x1="682.5" y1="205.5" x2="705.5" y2="205.5" stroke="#5e5e5e" stroke-width="1.2"/><line x1="690.5" y1="192.5" x2="690.5" y2="211.5" stroke="#5e5e5e" stroke-width="1.2"/><line x1="697.5" y1="192.5" x2="697.5" y2="211.5" stroke="#5e5e5e" stroke-width="1.2"/><rect x="922.2" y="117.0" width="13.3" height="32.0" fill="#f9f9f9" stroke="#333333" stroke-width="1.4"/><line x1="922.2" y1="127.5" x2="935.5" y2="127.5" stroke="#5e5e5e" stroke-width="1.2"/><line x1="922.2" y1="138.3" x2="935.5" y2="138.3" stroke="#5e5e5e" stroke-width="1.2"/><rect x="894.7" y="117.0" width="27.5" height="32.0" fill="#86bdea" stroke="#0f6cbd" stroke-width="1.4"/><line x1="908.4" y1="117" x2="908.4" y2="149" stroke="#0f6cbd" stroke-width="1.3"/><line x1="894.7" y1="127.5" x2="922.2" y2="127.5" stroke="#0f6cbd" stroke-width="1.3"/><line x1="894.7" y1="138.3" x2="922.2" y2="138.3" stroke="#0f6cbd" stroke-width="1.3"/><rect x="986.7" y="112.1" width="34.7" height="15.7" fill="#f9f9f9" stroke="none"/><path d="M986.7,112.1 L986.7,127.6 L996.5,127.6 M1011.5,127.6 L1021.4,127.6 L1021.4,112.1" fill="none" stroke="#333333" stroke-width="1.4"/><path d="M998.3,112.1 L998.3,133.5 L1004,139.5 L1009.7,133.5 L1009.7,112.1" fill="#86bdea" stroke="#0f6cbd" stroke-width="1.4"/><path d="M995.3,136.2 L1011.3,152.2 M1011.3,136.2 L995.3,152.2" stroke="#e8474b" stroke-width="1.4"/><path d="M1084.9,115.7 L1103.7,115.7 L1100.3,118.9 L1107.6,126.3 L1084.9,126.3 Z" fill="#86bdea" stroke="none"/><path d="M1084.9,115.7 L1103.7,115.7 M1084.9,126.3 L1107.6,126.3" stroke="#0f6cbd" stroke-width="1.5"/><path d="M1103.3,118.4 L1111.8,126.9 L1126.7,112.4" fill="none" stroke="#ffffff" stroke-width="3.2"/><path d="M1103.3,118.4 L1111.8,126.9 L1126.7,112.4" fill="none" stroke="#2e9e4d" stroke-width="1.4"/><rect x="1084.9" y="128.7" width="15.9" height="20.5" fill="#f9f9f9"/><path d="M1100.8,128.7 L1100.8,149.2 L1084.9,149.2 M1084.9,138.3 L1100.8,138.3" fill="none" stroke="#333333" stroke-width="1.4"/><path d="M1168.6,120.4 L1173.5,110.8 L1178.4,120.4 M1170.46,116.94 L1176.54,116.94" fill="none" stroke="#1f86d6" stroke-width="1.7"/><path d="M1168.9,124.3 L1177.3,124.3 L1168.9,133.2 L1177.3,133.2" fill="none" stroke="#333333" stroke-width="1.7"/><path d="M1186.7,110.2 L1186.7,133.0 M1181.7,128.0 L1186.7,133.0 L1191.7,128.0" fill="none" stroke="#333333" stroke-width="1.4"/><path d="M1168.9,149.8 L1177.3,149.8 L1168.9,158.7 L1177.3,158.7" fill="none" stroke="#333333" stroke-width="1.7"/><path d="M1168.6,172.8 L1173.5,163.2 L1178.4,172.8 M1170.46,169.34 L1176.54,169.34" fill="none" stroke="#1f86d6" stroke-width="1.7"/><path d="M1186.7,149.0 L1186.7,172.4 M1181.7,167.4 L1186.7,172.4 L1191.7,167.4" fill="none" stroke="#333333" stroke-width="1.4"/><path d="M1258.4,150 L1258.4,143 Q1258.4,139 1254,134.5 Q1250.3,130.5 1250.3,125.2 A14,13.6 0 1 1 1278.3,125.2 Q1278.3,130.5 1274.6,134.5 Q1270.2,139 1270.2,143 L1270.2,150 Z" fill="#f9f9f9" stroke="#333333" stroke-width="1.4" stroke-linejoin="round"/><line x1="1258.4" y1="145.5" x2="1270.2" y2="145.5" stroke="#333333" stroke-width="1.3"/><line x1="1259.4" y1="153.2" x2="1269.2" y2="153.2" stroke="#333333" stroke-width="1.3"/><rect x="1350.5" y="112.5" width="27.0" height="27.0" fill="#f9f9f9" stroke="#333333" stroke-width="1.4"/><rect x="1350.5" y="112.5" width="27.0" height="5.0" fill="#c8c8c8" stroke="#333333" stroke-width="1.4"/><line x1="1350.5" y1="124.5" x2="1377.5" y2="124.5" stroke="#6b6b6b" stroke-width="1.2"/><line x1="1350.5" y1="132.5" x2="1377.5" y2="132.5" stroke="#6b6b6b" stroke-width="1.2"/><line x1="1359.5" y1="117.5" x2="1359.5" y2="139.5" stroke="#6b6b6b" stroke-width="1.2"/><line x1="1368.5" y1="117.5" x2="1368.5" y2="139.5" stroke="#6b6b6b" stroke-width="1.2"/><path d="M1360,140 L1366,140 L1366,127 L1378,127 Z" fill="#fff"/><rect x="1364.5" y="126.5" width="27.0" height="27.0" fill="#f9f9f9" stroke="#333333" stroke-width="1.4"/><rect x="1364.5" y="126.5" width="27.0" height="4.0" fill="#c8c8c8" stroke="#333333" stroke-width="1.4"/><line x1="1364.5" y1="138.5" x2="1391.5" y2="138.5" stroke="#6b6b6b" stroke-width="1.2"/><line x1="1364.5" y1="145.5" x2="1391.5" y2="145.5" stroke="#6b6b6b" stroke-width="1.2"/><line x1="1373.5" y1="130.5" x2="1373.5" y2="153.5" stroke="#6b6b6b" stroke-width="1.2"/><line x1="1382.5" y1="130.5" x2="1382.5" y2="153.5" stroke="#6b6b6b" stroke-width="1.2"/><path d="M1347,147.1 L1370.5,147.1 M1360.6,137.9 L1370.5,147.1 L1360.6,156.4" fill="none" stroke="#ffffff" stroke-width="3.5"/><path d="M1347,147.1 L1370.5,147.1 M1360.6,137.9 L1370.5,147.1 L1360.6,156.4" fill="none" stroke="#1f86d6" stroke-width="1.4"/><rect x="1444.70" y="112.90" width="3.8" height="3.8" fill="#fff" stroke="#333333" stroke-width="1.3"/><rect x="1450.75" y="112.90" width="3.8" height="3.8" fill="#fff" stroke="#333333" stroke-width="1.3"/><rect x="1456.80" y="112.90" width="3.8" height="3.8" fill="#fff" stroke="#333333" stroke-width="1.3"/><rect x="1444.70" y="118.95" width="3.8" height="3.8" fill="#fff" stroke="#333333" stroke-width="1.3"/><rect x="1450.75" y="118.95" width="3.8" height="3.8" fill="#fff" stroke="#333333" stroke-width="1.3"/><rect x="1456.80" y="118.95" width="3.8" height="3.8" fill="#fff" stroke="#333333" stroke-width="1.3"/><rect x="1444.70" y="125.00" width="3.8" height="3.8" fill="#fff" stroke="#333333" stroke-width="1.3"/><rect x="1450.75" y="125.00" width="3.8" height="3.8" fill="#fff" stroke="#333333" stroke-width="1.3"/><rect x="1456.80" y="125.00" width="3.8" height="3.8" fill="#fff" stroke="#333333" stroke-width="1.3"/><text x="1463.3" y="128.2" font-family="Liberation Sans" font-weight="700" font-size="10.2" fill="#333333">CDM</text><rect x="1465.9" y="135.4" width="19.4" height="17.6" fill="#f9f9f9" stroke="#333333" stroke-width="1.4"/><path d="M1468.5,144.9 L1473.3,149 L1482.3,139.6" fill="none" stroke="#2e9e4d" stroke-width="1.4"/><path d="M1446.1,130.1 L1446.1,135 Q1446.1,145.3 1456,145.3 L1463.8,145.3 M1456.6,138.3 L1463.8,145.3 L1456.6,153.1" fill="none" stroke="#1f86d6" stroke-width="1.4"/><path d="M1554.2,115.5 Q1551.5,112.2 1547.5,112.6 Q1543,113.2 1541.8,117.5 Q1536.5,118.8 1536,124.5 Q1533.6,128.5 1535,133 Q1533.5,137.5 1536,141 Q1535.5,146.5 1540,148.5 Q1541.5,153.2 1546.5,153.4 Q1551,153.8 1554.2,151 Q1557.4,153.8 1561.9,153.4 Q1566.9,153.2 1568.4,148.5 Q1572.9,146.5 1572.4,141 Q1574.9,137.5 1573.4,133 Q1574.8,128.5 1572.4,124.5 Q1571.9,118.8 1566.6,117.5 Q1565.4,113.2 1560.9,112.6 Q1556.9,112.2 1554.2,115.5 Z" fill="#f9f9f9" stroke="#333333" stroke-width="1.4" stroke-linejoin="round"/><path d="M1554.2,115.5 L1554.2,151" stroke="#333333" stroke-width="1.4"/><path d="M1548.2,122.6 L1548.2,130.5 M1542,130.5 L1554.2,130.5 M1545.2,141.5 L1554.2,141.5 M1554.2,124.6 L1563.5,124.6 M1554.2,133.8 L1566.5,133.8 M1560.2,133.8 L1560.2,143" fill="none" stroke="#333333" stroke-width="1.3"/><circle cx="1548.2" cy="122.6" r="1.3" fill="#333333"/><circle cx="1542" cy="130.5" r="1.3" fill="#333333"/><circle cx="1545.2" cy="141.5" r="1.3" fill="#333333"/><circle cx="1563.5" cy="124.6" r="1.3" fill="#333333"/><circle cx="1566.5" cy="133.8" r="1.3" fill="#333333"/><circle cx="1560.2" cy="143" r="1.3" fill="#333333"/><path d="M1631.1,110.9 L1637.9,110.9 L1637.9,132.7 L1621.9,132.7 L1621.9,126.1" fill="#f9f9f9" stroke="#333333" stroke-width="1.4"/><path d="M1622,121.5 L1622,132 L1637,132 L1637,112 L1629,112 Z" fill="#f9f9f9"/><path d="M1631.1,110.9 L1637.9,110.9 L1637.9,132.7 L1621.9,132.7 L1621.9,126.1" fill="none" stroke="#333333" stroke-width="1.4"/><path d="M1622.7,110.2 L1627.6,110.2 L1625.3,114.5 L1628,114.5 L1619.2,123.3 L1621.8,117.2 L1618.6,117.2 Z" fill="#e0700f" stroke="#e0700f" stroke-width="0.8" stroke-linejoin="round"/><path d="M1627.6,119.8 L1631,115 L1634.2,115 L1634.2,119.8 Z" fill="#86bdea" stroke="#0f6cbd" stroke-width="1.2"/><line x1="1625.7" y1="122.7" x2="1631.6" y2="122.7" stroke="#6b6b6b" stroke-width="1.2"/><rect x="1626.8" y="125.8" width="7.2" height="3.1" fill="#ddd" stroke="#6b6b6b" stroke-width="1.1"/><polyline points="360.4,292.3 351.8,300.1 360.4,307.9" fill="none" stroke="#323130" stroke-width="2.3"/><path d="M61.2,345.4 L61.2,355.3 L51.3,355.3 Z" fill="#323130"/><path d="M71.8,338.6 L82.888,338.6 L85.888,341.6 L98.2,341.6 L98.2,360.9 L71.8,360.9 Z" fill="#f8d98b" stroke="#e3730c" stroke-width="1.6" stroke-linejoin="miter"/><path d="M71.8,343.8 L83.388,343.8 Q85.888,343.8 85.888,341.6" fill="none" stroke="#e3730c" stroke-width="1.5"/><path d="M66.7,383.2 L73.2,389.3 L66.7,395.4 Z" fill="none" stroke="#323130" stroke-width="1.3" stroke-linejoin="round"/><path d="M87.1,377.7 L97.89399999999999,377.7 L100.89399999999999,380.7 L112.8,380.7 L112.8,399.8 L87.1,399.8 Z" fill="#f8d98b" stroke="#e3730c" stroke-width="1.6" stroke-linejoin="miter"/><path d="M87.1,382.9 L98.39399999999999,382.9 Q100.89399999999999,382.9 100.89399999999999,380.7" fill="none" stroke="#e3730c" stroke-width="1.5"/><rect x="87.5" y="415.5" width="25.0" height="25.0" fill="#f9f9f9" stroke="#333333" stroke-width="1.4"/><rect x="87.5" y="415.5" width="25.0" height="5.0" fill="#c8c8c8" stroke="#333333" stroke-width="1.4"/><line x1="87.5" y1="427.5" x2="112.5" y2="427.5" stroke="#5e5e5e" stroke-width="1.2"/><line x1="87.5" y1="433.5" x2="112.5" y2="433.5" stroke="#5e5e5e" stroke-width="1.2"/><line x1="95.5" y1="420.5" x2="95.5" y2="440.5" stroke="#5e5e5e" stroke-width="1.2"/><line x1="104.5" y1="420.5" x2="104.5" y2="440.5" stroke="#5e5e5e" stroke-width="1.2"/><rect x="71.5" y="454.5" width="27.0" height="25.0" fill="#f9f9f9" stroke="#333333" stroke-width="1.4"/><rect x="71.5" y="454.5" width="27.0" height="5.0" fill="#c8c8c8" stroke="#333333" stroke-width="1.4"/><line x1="71.5" y1="466.5" x2="98.5" y2="466.5" stroke="#5e5e5e" stroke-width="1.2"/><line x1="71.5" y1="472.5" x2="98.5" y2="472.5" stroke="#5e5e5e" stroke-width="1.2"/><line x1="80.5" y1="459.5" x2="80.5" y2="479.5" stroke="#5e5e5e" stroke-width="1.2"/><line x1="89.5" y1="459.5" x2="89.5" y2="479.5" stroke="#5e5e5e" stroke-width="1.2"/><path d="M418.2,278.1 L438.2,298.1 M438.2,278.1 L418.2,298.1" stroke="#b4b4b4" stroke-width="1.35"/><polyline points="456.8,288.2 465.3,296.3 482.6,279.8" fill="none" stroke="#b4b4b4" stroke-width="1.35"/><path d="M499.6,299.4 C501.2,301.6 503.6,300.9 504.7,297.6 C506.4,292.2 509.0,283.6 510.6,279.6 C512.2,275.9 514.5,275.0 517.6,276.6" stroke="#242424" stroke-width="1.7" fill="none" stroke-linecap="round"/><circle cx="500.3" cy="299.6" r="1.35" fill="#242424"/><circle cx="517.3" cy="277.2" r="1.3" fill="#242424"/><path d="M505.6,283.3 L513.9,283.3" stroke="#242424" stroke-width="1.3"/><path d="M511.6,288.6 Q513.4,285.8 515.0,288.0 L518.6,295.2 Q519.8,297.6 522.0,295.8" stroke="#242424" stroke-width="1.5" fill="none" stroke-linecap="round"/><path d="M521.2,287.2 Q519.4,286.8 517.6,288.6 L514.0,293.4 Q512.6,295.4 511.8,296.0" stroke="#242424" stroke-width="1.1" fill="none" stroke-linecap="round"/><circle cx="521.4" cy="287.4" r="1.1" fill="#242424"/><circle cx="512.0" cy="296.0" r="1.1" fill="#242424"/><polyline points="1527,283.6 1535.2,291.8 1543.4,283.6" fill="none" stroke="#424242" stroke-width="1.3"/><path transform="translate(0.00,0)" d="M453.9,334.3 L458.3,323.8 L462.7,334.3 M455.5,330.6 L461.1,330.6 M462.7,327.3 L462.7,316.9 L465.6,316.9 Q468.2,316.9 468.2,319.5 Q468.2,321.9 465.5,321.9 L462.7,321.9 M465.5,321.9 Q468.7,321.9 468.7,324.6 Q468.7,327.3 465.7,327.3 L462.7,327.3 M475.6,328.4 Q474.1,326.7 471.6,326.7 Q467.1,326.7 467.1,332.5 Q467.1,338.2 471.6,338.2 Q474.1,338.2 475.6,336.6" fill="none" stroke="#323130" stroke-width="1.3"/><path d="M677.90,324.2 L689.50,324.2 L683.70,329.9 Z" fill="#323130"/><path transform="translate(249.80,0)" d="M453.9,334.3 L458.3,323.8 L462.7,334.3 M455.5,330.6 L461.1,330.6 M462.7,327.3 L462.7,316.9 L465.6,316.9 Q468.2,316.9 468.2,319.5 Q468.2,321.9 465.5,321.9 L462.7,321.9 M465.5,321.9 Q468.7,321.9 468.7,324.6 Q468.7,327.3 465.7,327.3 L462.7,327.3 M475.6,328.4 Q474.1,326.7 471.6,326.7 Q467.1,326.7 467.1,332.5 Q467.1,338.2 471.6,338.2 Q474.1,338.2 475.6,336.6" fill="none" stroke="#323130" stroke-width="1.3"/><path d="M869.20,324.2 L880.80,324.2 L875.00,329.9 Z" fill="#323130"/><path transform="translate(441.10,0)" d="M453.9,334.3 L458.3,323.8 L462.7,334.3 M455.5,330.6 L461.1,330.6 M462.7,327.3 L462.7,316.9 L465.6,316.9 Q468.2,316.9 468.2,319.5 Q468.2,321.9 465.5,321.9 L462.7,321.9 M465.5,321.9 Q468.7,321.9 468.7,324.6 Q468.7,327.3 465.7,327.3 L462.7,327.3 M475.6,328.4 Q474.1,326.7 471.6,326.7 Q467.1,326.7 467.1,332.5 Q467.1,338.2 471.6,338.2 Q474.1,338.2 475.6,336.6" fill="none" stroke="#323130" stroke-width="1.3"/><path d="M1059.00,324.2 L1070.60,324.2 L1064.80,329.9 Z" fill="#323130"/><path transform="translate(630.90,0)" d="M453.9,334.3 L458.3,323.8 L462.7,334.3 M455.5,330.6 L461.1,330.6 M462.7,327.3 L462.7,316.9 L465.6,316.9 Q468.2,316.9 468.2,319.5 Q468.2,321.9 465.5,321.9 L462.7,321.9 M465.5,321.9 Q468.7,321.9 468.7,324.6 Q468.7,327.3 465.7,327.3 L462.7,327.3 M475.6,328.4 Q474.1,326.7 471.6,326.7 Q467.1,326.7 467.1,332.5 Q467.1,338.2 471.6,338.2 Q474.1,338.2 475.6,336.6" fill="none" stroke="#323130" stroke-width="1.3"/><path d="M1250.40,324.2 L1262.00,324.2 L1256.20,329.9 Z" fill="#323130"/><rect x="413.5" y="316.5" width="22.0" height="22.0" fill="#ffffff" stroke="#333333" stroke-width="1.4"/><rect x="413.5" y="316.5" width="22.0" height="4.0" fill="#c8c8c8" stroke="#333333" stroke-width="1.4"/><line x1="413.5" y1="326.5" x2="435.5" y2="326.5" stroke="#6b6b6b" stroke-width="1.2"/><line x1="413.5" y1="332.5" x2="435.5" y2="332.5" stroke="#6b6b6b" stroke-width="1.2"/><line x1="420.5" y1="320.5" x2="420.5" y2="338.5" stroke="#6b6b6b" stroke-width="1.2"/><line x1="428.5" y1="320.5" x2="428.5" y2="338.5" stroke="#6b6b6b" stroke-width="1.2"/><path d="M1537.8,366.4 L1544.5,356.8 L1551.2,366.4 Z" fill="#8a8a8a" stroke="#8a8a8a" stroke-width="1.2" stroke-linejoin="round"/><path d="M1537.8,927.3 L1544.5,936.7 L1551.2,927.3 Z" fill="#8a8a8a" stroke="#8a8a8a" stroke-width="1.2" stroke-linejoin="round"/><polyline points="1891,292.1 1899.6,300 1891,307.9" fill="none" stroke="#323130" stroke-width="2.3"/><polyline points="1587.85,341.40 1593.60,347.40 1599.35,341.40" fill="none" stroke="#242424" stroke-width="1.9"/><circle cx="1690" cy="461.2" r="7.9" fill="none" stroke="#323130" stroke-width="1.2"/><line x1="1690" y1="459.5" x2="1690" y2="465.5" stroke="#323130" stroke-width="1.3"/><circle cx="1690" cy="456.6" r="0.9" fill="#323130"/><polyline points="1587.85,535.60 1593.60,541.60 1599.35,535.60" fill="none" stroke="#242424" stroke-width="1.9"/><path d="M1628.4,576 L1628.4,567.6 L1637.6,567.6 L1644.6,574.6 L1637.6,574.6 L1637.6,567.6" fill="#f9f9f9" stroke="#333333" stroke-width="1.3" stroke-linejoin="miter"/><rect x="1625.9" y="576.3" width="22.2" height="10.9" fill="#fff" stroke="#1f86d6" stroke-width="1.4"/><text x="1629.2" y="585.4" font-family="Liberation Sans" font-weight="700" font-size="8.6" fill="#333333" textLength="15.6" lengthAdjust="spacingAndGlyphs">csv</text><line x1="1628.2" y1="590.4" x2="1645.8" y2="590.4" stroke="#333333" stroke-width="1.3"/><path d="M1859.24,575.72 L1863.04,577.02 L1863.04,580.78 L1859.24,582.08 L1858.32,583.67 L1859.10,587.61 L1855.84,589.49 L1852.82,586.85 L1850.98,586.85 L1847.96,589.49 L1844.70,587.61 L1845.48,583.67 L1844.56,582.08 L1840.76,580.78 L1840.76,577.02 L1844.56,575.72 L1845.48,574.13 L1844.70,570.19 L1847.96,568.31 L1850.98,570.95 L1852.82,570.95 L1855.84,568.31 L1859.10,570.19 L1858.32,574.13Z" fill="#f9f9f9" stroke="#333333" stroke-width="1.4" stroke-linejoin="round"/><circle cx="1851.9" cy="578.9" r="3.7" fill="none" stroke="#333333" stroke-width="1.4"/><path d="M1874.7,572.2 L1874.7,585.4 Q1874.7,588.6 1881.6,588.6" fill="none" stroke="#c4441c" stroke-width="1.35"/><path d="M1889.9,572.2 L1889.9,577" fill="none" stroke="#c4441c" stroke-width="1.35"/><ellipse cx="1882.3" cy="572.2" rx="7.6" ry="3.3" fill="none" stroke="#c4441c" stroke-width="1.35"/><circle cx="1889" cy="585" r="5.4" fill="#edebe9" stroke="#c4441c" stroke-width="1.35"/><path d="M1888.3,581.9 L1888.3,585.7 L1891.2,585.7" fill="none" stroke="#c4441c" stroke-width="1.2"/><path d="M1662.00,980.00 L1662.00,965.40 Q1662.00,962.40 1665.00,962.40 L1678.60,962.40 Q1681.60,962.40 1681.60,965.60 Q1681.60,968.80 1678.60,968.80 L1674.40,968.80 L1674.40,982.40 Q1674.40,985.20 1671.60,985.20 L1661.00,985.20 Q1658.30,985.20 1658.30,982.60 Q1658.30,980.00 1661.00,980.00 L1671.20,980.00 L1671.20,983.40" fill="#f9f9f9" stroke="#333333" stroke-width="1.4" stroke-linejoin="round"/><path d="M1674.40,968.80 L1674.40,965.60 Q1674.40,962.40 1678.00,962.40" fill="none" stroke="#333333" stroke-width="1.3"/><rect x="1768.1" y="962.9" width="7.3" height="5.6" fill="#fff" stroke="#333333" stroke-width="1.3"/><rect x="1768.1" y="978.5" width="7.3" height="5.6" fill="#fff" stroke="#333333" stroke-width="1.3"/><path d="M1775.4,965.7 L1777.6,965.7 L1777.6,981.3 L1775.4,981.3 M1777.6,973.4 L1782.2,973.4" fill="none" stroke="#333333" stroke-width="1.3"/><rect x="1782.8" y="970.4" width="7.5" height="6" fill="#86bdea" stroke="#0f6cbd" stroke-width="1.3"/><rect x="1836.5" y="962.5" width="23.0" height="23.0" fill="#f9f9f9" stroke="#333333" stroke-width="1.4"/><rect x="1836.5" y="962.5" width="23.0" height="4.0" fill="#c8c8c8" stroke="#333333" stroke-width="1.4"/><line x1="1836.5" y1="972.5" x2="1859.5" y2="972.5" stroke="#5e5e5e" stroke-width="1.2"/><line x1="1836.5" y1="979.5" x2="1859.5" y2="979.5" stroke="#5e5e5e" stroke-width="1.2"/><line x1="1844.5" y1="966.5" x2="1844.5" y2="985.5" stroke="#5e5e5e" stroke-width="1.2"/><line x1="1851.5" y1="966.5" x2="1851.5" y2="985.5" stroke="#5e5e5e" stroke-width="1.2"/><rect x="1890.9" y="962.9" width="22.4" height="22.1" fill="#fff" stroke="#333333" stroke-width="1.4"/><rect x="1890.9" y="962.9" width="22.4" height="3.8" fill="#c8c8c8" stroke="#333333" stroke-width="1.4"/><path d="M1898.4,966.7 L1898.4,985 M1905.8,966.7 L1905.8,985" stroke="#6b6b6b" stroke-width="1.2"/></svg>
</body></html>
